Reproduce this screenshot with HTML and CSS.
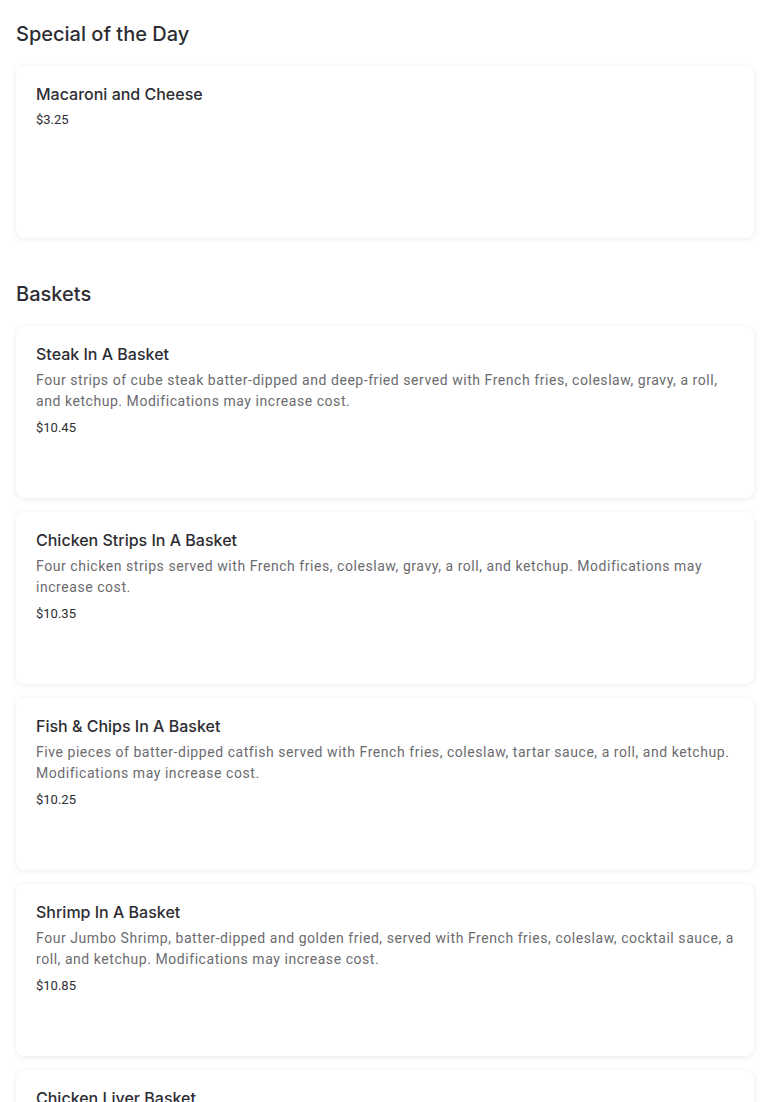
FILE: index.html
```html
<!DOCTYPE html>
<html>
<head>
<meta charset="utf-8">
<link rel="stylesheet" href="styles.css">
</head>
<body>
<main class="menu">
  <section class="section">
    <h2 class="section-title first">Special of the Day</h2>
    <div class="card">
      <h3 class="item-title">Macaroni and Cheese</h3>
      <div class="price">$3.25</div>
    </div>
  </section>
  <section class="section">
    <h2 class="section-title">Baskets</h2>
    <div class="card">
      <h3 class="item-title">Steak In A Basket</h3>
      <p class="desc">Four strips of cube steak batter-dipped and deep-fried served with French fries, coleslaw, gravy, a roll, and ketchup. Modifications may increase cost.</p>
      <div class="price">$10.45</div>
    </div>
    <div class="card">
      <h3 class="item-title">Chicken Strips In A Basket</h3>
      <p class="desc">Four chicken strips served with French fries, coleslaw, gravy, a roll, and ketchup. Modifications may increase cost.</p>
      <div class="price">$10.35</div>
    </div>
    <div class="card">
      <h3 class="item-title">Fish &amp; Chips In A Basket</h3>
      <p class="desc">Five pieces of batter-dipped catfish served with French fries, coleslaw, tartar sauce, a roll, and ketchup. Modifications may increase cost.</p>
      <div class="price">$10.25</div>
    </div>
    <div class="card">
      <h3 class="item-title">Shrimp In A Basket</h3>
      <p class="desc">Four Jumbo Shrimp, batter-dipped and golden fried, served with French fries, coleslaw, cocktail sauce, a roll, and ketchup. Modifications may increase cost.</p>
      <div class="price">$10.85</div>
    </div>
    <div class="card">
      <h3 class="item-title">Chicken Liver Basket</h3>
      <p class="desc">Chicken livers served with French fries, coleslaw, gravy, a roll, and ketchup. Modifications may increase cost.</p>
      <div class="price">$9.95</div>
    </div>
  </section>
</main>
</body>
</html>
```

FILE: styles.css
```css
html, body {
  margin: 0;
  padding: 0;
  background: #ffffff;
}
body {
  font-family: "Inter", "Noto Sans", sans-serif;
  color: #2d2d33;
}
.menu {
  padding: 0 16px;
}
.section-title {
  font-size: 20px;
  line-height: 28px;
  font-weight: 500;
  color: #2d2d33;
  margin: 42px 0 18px;
}
.section-title.first {
  margin-top: 20px;
}
.card {
  box-sizing: border-box;
  height: 172px;
  padding: 18px 20px;
  margin-bottom: 14px;
  background: #fff;
  border-radius: 8px;
  box-shadow: 0 1px 6px rgba(0, 0, 0, 0.08), 0 0 1px rgba(0, 0, 0, 0.04);
}
.item-title {
  margin: 0;
  font-size: 16px;
  line-height: 20px;
  font-weight: 500;
  color: #2d2d33;
}
.desc {
  margin: 6px 0 0;
  font-family: "Roboto", "Liberation Sans", sans-serif;
  font-size: 14px;
  line-height: 21px;
  letter-spacing: 0.55px;
  color: #6b6b70;
}
.price {
  margin-top: 7px;
  font-family: "Roboto", "Liberation Sans", sans-serif;
  font-size: 13px;
  line-height: 18px;
  color: #2d2d33;
}
```
